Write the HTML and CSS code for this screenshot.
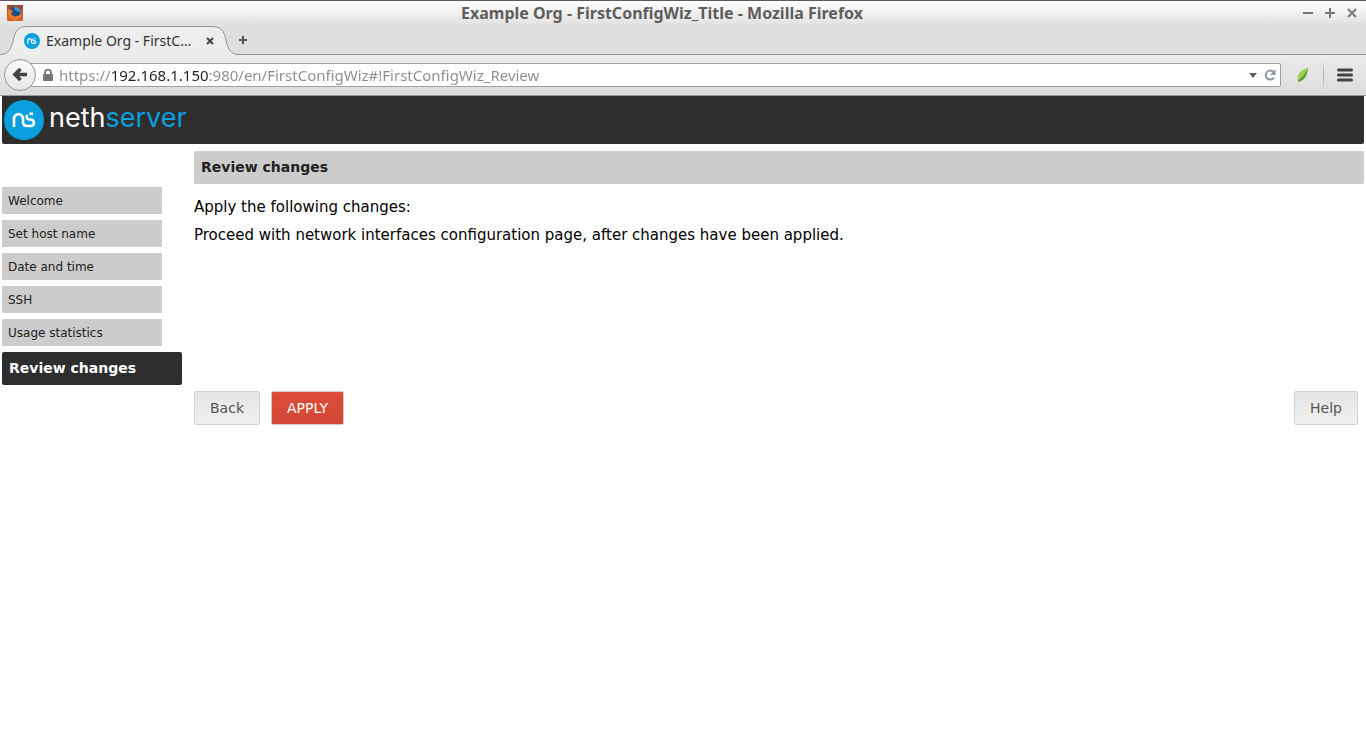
FILE: index.html
```html
<!DOCTYPE html>
<html lang="en">
<head>
<meta charset="utf-8">
<title>Example Org - FirstConfigWiz_Title</title>
<link rel="stylesheet" href="styles.css">
</head>
<body>
<div class="browser">
  <div class="titlebar">
    <svg class="app-icon" width="16" height="16" viewBox="0 0 16 16" aria-hidden="true">
      <rect width="16" height="16" rx="1" fill="#d0602a"/>
      <path d="M0 0h16v5L9 1 0 6z" fill="#a4492a"/>
      <circle cx="8.500" cy="7.500" r="6" fill="#1f4f86"/>
      <path d="M7 2c3-1 7 1 6.500 6L10 6 8 5z" fill="#4a93c4"/>
      <path d="M1 2c0 2 1 3 3 3l2 1-2 2c1 3 4 4 6 3 2 0 4-2 4-5 2 5-1 9-6 9S0 11 1 6z" fill="#ee7a26"/>
    </svg>
    <span class="window-title">Example Org - FirstConfigWiz_Title - Mozilla Firefox</span>
    <div class="window-buttons">
      <button aria-label="Minimize"><svg width="10" height="10" viewBox="0 0 10 10"><path d="M0 5h10" /></svg></button>
      <button aria-label="Maximize"><svg width="10" height="10" viewBox="0 0 10 10"><path d="M0 5h10M5 0v10"/></svg></button>
      <button aria-label="Close window"><svg width="10" height="10" viewBox="0 0 10 10"><path d="M1 1l8 8M9 1l-8 8"/></svg></button>
    </div>
  </div>
  <div class="tabstrip">
    <div class="tab">
      <svg class="tab-shape" width="240" height="29" viewBox="0 0 240 29" aria-hidden="true">
        <path d="M0 28.500C8 28.500 11 24 13 15C15 5 18 .5 27 .5H212C221 .5 224 5 226 14C228 24 231 28.500 239 28.500V29H0z" fill="#ededed"/>
        <path d="M0 28.500C8 28.500 11 24 13 15C15 5 18 .5 27 .5H212C221 .5 224 5 226 14C228 24 231 28.500 239 28.500" fill="none" stroke="#969696"/>
      </svg>
      <svg class="favicon" width="16" height="16" viewBox="0 0 40 40" aria-hidden="true"><circle cx="20" cy="20" r="20" fill="#0aa0e0"/><g fill="none" stroke="#fff" stroke-width="3"><path d="M9.500 27V19c0-6.500 9-6.500 9 0V22c0 3 1.500 4 4.500 4h3c4.500 0 4.500-6.500 0-6.500h-1c-3 0-3.500-3-2-4.500"/><path d="M25 13.800h3.500"/></g></svg>
      <span class="tab-label">Example Org - FirstC…</span>
      <button class="tab-close" aria-label="Close tab"><svg width="8" height="8" viewBox="0 0 8 8"><path d="M1 1l6 6M7 1L1 7" stroke="#4a4a4a" stroke-width="2.200"/></svg></button>
    </div>
    <button class="new-tab" aria-label="New tab"><svg width="8" height="8" viewBox="0 0 8 8"><path d="M0 4h8M4 0v8" stroke="#555" stroke-width="2"/></svg></button>
  </div>
  <div class="toolbar">
    <button class="back" aria-label="Go back"><svg width="32" height="32" viewBox="0 0 32 32"><path d="M16.500 10L11 15.500l5.500 5.500M12 15.500h11" fill="none" stroke="#444" stroke-width="3.600"/></svg></button>
    <div class="urlbar">
      <svg width="10" height="13" viewBox="0 0 10 13" aria-hidden="true"><path d="M2 6V3.500a3 2.800 0 0 1 6 0V6" fill="none" stroke="#757575" stroke-width="1.800"/><rect y="5" width="10" height="7" rx="1" fill="#757575"/></svg>
      <input class="url" aria-label="Address" value="https://192.168.1.150:980/en/FirstConfigWiz#!FirstConfigWiz_Review">
      <button aria-label="Show history"><svg width="10" height="6" viewBox="0 0 10 6"><path d="M1 1h8L5 6z" fill="#606060"/></svg></button>
      <button aria-label="Reload"><svg width="12" height="12" viewBox="0 0 12 12"><path d="M9.500 3A4.500 4.500 0 1 0 10 8.500" fill="none" stroke="#8e9aa7" stroke-width="2"/><path d="M11.500 0v6H6z" fill="#8e9aa7"/></svg></button>
    </div>
    <button class="addon" aria-label="Extension"><svg width="12" height="14" viewBox="0 0 12 14"><path d="M11 0C5 2 0 5 1 13l1 1C9 11 10 7 11 0z" fill="#5a9a37"/><path d="M11 0C5 2 0 5 1 13 4 10 8 7 11 0z" fill="#9dcf50"/></svg></button>
    <span class="divider"></span>
    <button class="menu" aria-label="Open menu"><svg width="16" height="14" viewBox="0 0 16 14"><path d="M1.500 2h13M1.500 7h13M1.500 12h13" stroke="#454345" stroke-width="3" stroke-linecap="round"/></svg></button>
  </div>
</div>
<div class="page">
  <header class="banner">
    <svg width="40" height="40" viewBox="0 0 40 40" aria-hidden="true"><circle cx="20" cy="20" r="20" fill="#0aa0e0"/><g fill="none" stroke="#fff" stroke-width="2.600"><path d="M10 27V19c0-6.500 9-6.500 9 0V22c0 3 1.500 4 4.500 4h3c4.500 0 4.500-6.500 0-6.500h-1c-3 0-3.500-3-2-4.500"/><path d="M25.500 13.800h3.500"/></g></svg>
    <span class="wordmark">neth<span class="accent">server</span></span>
  </header>
  <div class="columns">
    <nav class="steps">
      <a href="#welcome">Welcome</a>
      <a href="#host">Set host name</a>
      <a href="#date">Date and time</a>
      <a href="#ssh">SSH</a>
      <a href="#stats">Usage statistics</a>
      <a href="#review" class="current" aria-current="step">Review changes</a>
    </nav>
    <main class="content">
      <h1>Review changes</h1>
      <p>Apply the following changes:</p>
      <p>Proceed with network interfaces configuration page, after changes have been applied.</p>
      <div class="actions">
        <button class="btn">Back</button>
        <button class="btn primary">APPLY</button>
        <button class="btn help">Help</button>
      </div>
    </main>
  </div>
</div>
</body>
</html>
```

FILE: styles.css
```css
* { box-sizing: border-box; }
body {
  margin: 0;
  background: #fff;
  color: #000;
  font-family: "DejaVu Sans", sans-serif;
  font-size: 15px;
}
button {
  padding: 0;
  border: 0;
  background: none;
  display: flex;
  align-items: center;
  justify-content: center;
  font-family: inherit;
}
svg { display: block; flex: none; }

.browser {
  font-family: "Noto Sans", sans-serif;
  background: #dfdfdf;
}
.titlebar {
  display: grid;
  grid-template-columns: 60px 1fr 100px;
  align-items: center;
  height: 26px;
  padding: 0 9px 2px 7px;
  border-top: 1px solid #5c595c;
  background: linear-gradient(#fff, #e0e0e0);
}
.window-title {
  color: #5f5d5c;
  font-size: 16px;
  font-weight: 700;
  line-height: 22px;
  text-align: center;
}
.window-buttons {
  display: flex;
  justify-content: flex-end;
  gap: 12px;
}
.window-buttons svg { stroke: #777; stroke-width: 2; }

.tabstrip {
  display: flex;
  height: 29px;
  border-bottom: 1px solid #969696;
}
.tab {
  position: relative;
  display: flex;
  align-items: center;
  width: 239px;
  height: 29px;
  padding: 0 25px 0 24px;
  gap: 6px;
}
.tab-shape { position: absolute; left: 0; top: 0; }
.favicon, .tab-label, .tab-close { position: relative; }
.tab-label {
  flex: 1;
  color: #333;
  font-size: 14px;
  white-space: nowrap;
}
.new-tab { width: 8px; }

.toolbar {
  display: flex;
  align-items: center;
  height: 41px;
  padding: 0 13px 0 4px;
  border-bottom: 1px solid #989898;
  background: linear-gradient(#ebebeb, #dcdcdc);
}
.back {
  position: relative;
  z-index: 1;
  width: 32px;
  height: 32px;
  border: 1px solid #929699;
  border-radius: 50%;
  background: linear-gradient(#fafafa, #e6e6e6);
}
.urlbar {
  display: flex;
  flex: 1;
  align-items: center;
  height: 24px;
  margin-left: -8px;
  padding: 0 4px 0 14px;
  gap: 6px;
  border: 1px solid #a0a0a0;
  border-radius: 0 2px 2px 0;
  background: #fff;
}
.url {
  flex: 1;
  min-width: 0;
  height: 22px;
  padding: 0;
  border: 0;
  outline: 0;
  background: linear-gradient(90deg, #8d8d8d 52px, #222 52px, #222 150px, #8d8d8d 150px);
  background-clip: text;
  color: transparent;
  font-family: inherit;
  font-size: 15px;
}
.addon { margin-left: 16px; }
.divider {
  width: 1px;
  height: 30px;
  margin: 0 13px 0 14px;
  background: linear-gradient(transparent, #a3abb5, transparent);
}

.page { padding: 0 2px; }
.banner {
  display: flex;
  align-items: center;
  gap: 5px;
  height: 48px;
  padding: 0 2px;
  border-radius: 0 0 2px 2px;
  background: #2e2e2e;
}
.wordmark {
  padding-bottom: 4px;
  color: #fff;
  font-family: Inter, sans-serif;
  font-size: 27px;
  font-weight: 400;
  line-height: 40px;
}
.accent { color: #0aa0e0; }

.columns { display: flex; gap: 12px; padding-top: 7px; }
.steps {
  display: flex;
  flex-direction: column;
  gap: 6px;
  width: 180px;
  padding-top: 36px;
}
.steps a {
  width: 160px;
  padding: 1px 6px 0;
  border-radius: 1px;
  background: #ccc;
  color: #222;
  font-size: 12px;
  line-height: 26px;
  text-decoration: none;
}
.steps .current {
  width: 180px;
  padding: 0 7px;
  border-radius: 2px;
  background: #2e2e2e;
  color: #fff;
  font-size: 14px;
  font-weight: 700;
  line-height: 33px;
}
.content {
  display: flex;
  flex: 1;
  flex-direction: column;
}
.content h1 {
  margin: 0 0 13px;
  padding: 0 7px;
  border-radius: 2px;
  background: #ccc;
  color: #222;
  font-size: 14px;
  line-height: 33px;
}
.content p { margin: 0 0 8px; line-height: 20px; }
.actions {
  display: flex;
  gap: 11px;
  margin-top: 138px;
  padding-right: 6px;
}
.btn {
  height: 34px;
  padding: 0 15px;
  border: 1px solid #d3d3d3;
  border-radius: 2px;
  background: linear-gradient(#e5e5e5, #f0f0f0);
  color: #555;
  font-size: 14px;
}
.primary {
  border-color: #d9c8c6;
  background: linear-gradient(#dd4b39, #d14836);
  color: #fff;
}
.help { margin-left: auto; }
```
